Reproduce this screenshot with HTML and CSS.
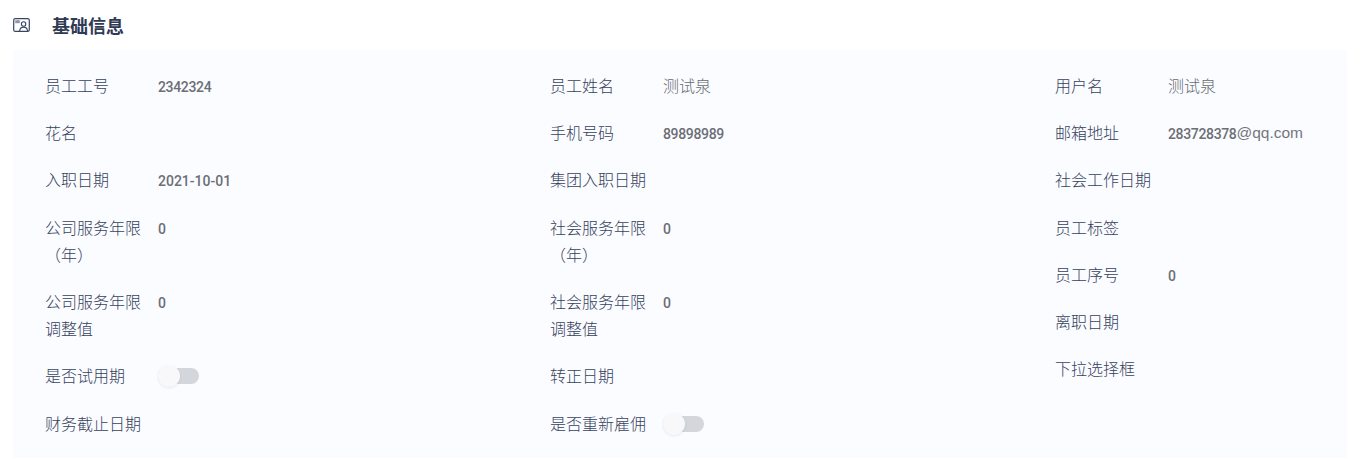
FILE: index.html
```html
<!DOCTYPE html>
<html lang="zh-CN">
<head>
<meta charset="utf-8">
<title>基础信息</title>
<link rel="stylesheet" href="styles.css">
</head>
<body>
<section class="section">
  <header class="section-head">
    <svg class="head-icon" viewBox="0 0 17 14" width="17" height="14" fill="none" stroke="#3a4660">
      <rect x="0.7" y="0.7" width="15.6" height="12.600" rx="1.6" stroke-width="1.200"/>
      <rect x="2.2" y="2.200" width="4.600" height="3" fill="#8f96a5" stroke="none"/>
      <circle cx="10.600" cy="6" r="2.200" stroke-width="1.100"/>
      <path d="M6.600 13c.3-2.600 2-3.900 4-3.900s3.700 1.300 4 3.900" stroke-width="1.100"/>
    </svg>
    <h2 class="section-title">基础信息</h2>
  </header>
  <div class="panel">
    <div class="col">
      <div class="field"><span class="label">员工工号</span><span class="num">2342324</span></div>
      <div class="field"><span class="label">花名</span></div>
      <div class="field"><span class="label">入职日期</span><span class="num date">2021-10-01</span></div>
      <div class="field"><span class="label">公司服务年限（年）</span><span class="num">0</span></div>
      <div class="field"><span class="label">公司服务年限调整值</span><span class="num">0</span></div>
      <div class="field"><span class="label">是否试用期</span><span class="switch"><span class="knob"></span></span></div>
      <div class="field"><span class="label">财务截止日期</span></div>
    </div>
    <div class="col">
      <div class="field"><span class="label">员工姓名</span><span class="value">测试泉</span></div>
      <div class="field"><span class="label">手机号码</span><span class="num">89898989</span></div>
      <div class="field"><span class="label">集团入职日期</span></div>
      <div class="field"><span class="label">社会服务年限（年）</span><span class="num">0</span></div>
      <div class="field"><span class="label">社会服务年限调整值</span><span class="num">0</span></div>
      <div class="field"><span class="label">转正日期</span></div>
      <div class="field"><span class="label">是否重新雇佣</span><span class="switch"><span class="knob"></span></span></div>
    </div>
    <div class="col">
      <div class="field"><span class="label">用户名</span><span class="value">测试泉</span></div>
      <div class="field"><span class="label">邮箱地址</span><span class="value email"><span class="num">283728378</span>@qq.com</span></div>
      <div class="field"><span class="label">社会工作日期</span></div>
      <div class="field"><span class="label">员工标签</span></div>
      <div class="field"><span class="label">员工序号</span><span class="num">0</span></div>
      <div class="field"><span class="label">离职日期</span></div>
      <div class="field"><span class="label">下拉选择框</span></div>
    </div>
  </div>
</section>
</body>
</html>
```
FILE: styles.css
```css
* { box-sizing: border-box; }
html, body { margin: 0; background: #fff; }
body { font-family: "Noto Sans CJK SC", "Noto Sans", sans-serif; }
.section { padding-left: 13px; }
.section-head { height: 50px; display: flex; align-items: center; gap: 22px; padding-bottom: 1px; }
.head-icon { flex: none; }
.section-title { margin: 0; font-size: 18px; line-height: 24px; font-weight: 700; color: #2f3a54; }
.panel { display: grid; grid-template-columns: 505px 505px 1fr; padding: 22px 0 21px 32px; background: #fbfcff; }
.col { display: flex; flex-direction: column; gap: 20px; }
.field { display: flex; gap: 17px; font-size: 16px; line-height: 27.2px; }
.label { flex: none; width: 96px; color: #36425c; font-weight: 300; }
.value { color: #666a72; font-weight: 300; }
.num { height: 27.2px; line-height: 30px; color: #6b6e75; font-family: Roboto, sans-serif; font-size: 14px; font-weight: 500; letter-spacing: -.35px; }
.date { letter-spacing: 0; }
.email { display: flex; color: #73767d; font-family: "Liberation Sans", sans-serif; font-size: 15.5px; font-weight: 400; }
.switch { position: relative; width: 41px; height: 16px; margin-top: 6px; border-radius: 8px; background: #d3d6db; }
.knob { position: absolute; left: 0; top: -3px; width: 22px; height: 22px; border-radius: 50%; background: #f8f8fa; box-shadow: 0 1px 3px rgba(0,0,0,.08); }
```
